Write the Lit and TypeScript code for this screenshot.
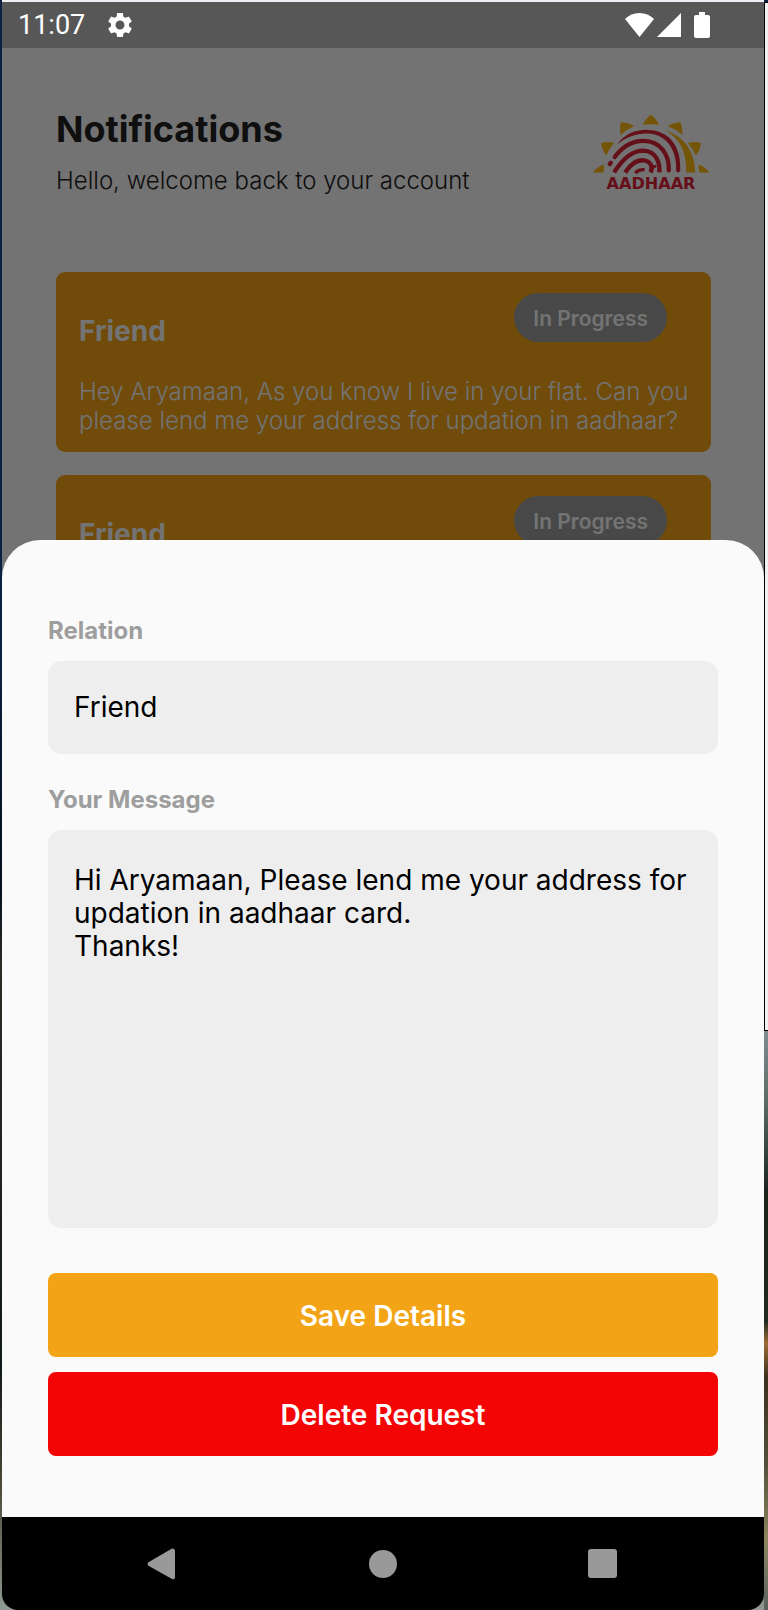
import { LitElement, html, css, svg } from "lit";
import { customElement, property, state } from "lit/decorators.js";

interface Request {
  relation: string;
  status: string;
  message: string;
}

const REQUESTS: Request[] = [
  {
    relation: "Friend",
    status: "In Progress",
    message:
      "Hey Aryamaan, As you know I live in your flat. Can you please lend me your address for updation in aadhaar?",
  },
  {
    relation: "Friend",
    status: "In Progress",
    message:
      "Hey Aryamaan, As you know I live in your flat. Can you please lend me your address for updation in aadhaar?",
  },
];

const rays = svg`
  <g fill="#fdb913">
    <path d="M190 60 Q198 44 214 29 Q231 42 239 60 Q214 56 190 60Z" />
    <path d="M125 52 Q148 52 165 64 Q142 73 124 90 Q120 70 125 52Z" />
    <path d="M66 115 Q85 108 105 114 Q90 130 82 151 Q70 138 66 115Z" />
    <path d="M42 202 Q54 184 75 178 Q76 190 73 202Z" />
    <path d="M265 64 Q284 52 303 52 Q310 70 309 90 Q290 73 265 64Z" />
    <path d="M325 115 Q346 108 364 114 Q361 138 348 151 Q340 130 325 115Z" />
    <path d="M357 178 Q376 184 389 202 H360Q357 190 357 178Z" />
    <path d="M259 77 C305 92 345 130 347 202 H320 C322 140 300 100 259 77Z" />
  </g>`;

const ridges = svg`
  <path fill="#dc2138" d="M114 119 C135 88 170 74 205 75 C270 76 307 125 302 198 Q296 206 290 198 C293 140 265 88 205 86 C170 85 140 97 114 119Z" />
  <g fill="none" stroke="#dc2138" stroke-width="13" stroke-linecap="round">
    <path d="M107 156 C130 125 160 108 192 108 C245 109 270 150 268 196" />
    <path d="M92 177 L95 173" />
  </g>
  <g fill="none" stroke="#dc2138" stroke-width="13">
    <path d="M105 202 C130 162 160 137 192 137 C230 139 242 170 240 202" />
    <path d="M138 202 C155 176 175 164 194 166 C214 169 222 185 214 202" />
    <path d="M213 190 Q220 182 231 184" stroke-width="8" />
    <path d="M168 204 Q178 192 196 194" stroke-width="10" />
  </g>`;

@customElement("status-bar")
export class StatusBar extends LitElement {
  static styles = css`
    :host {
      display: flex;
      align-items: center;
      height: 46px;
      padding: 0 54px 0 16px;
      box-sizing: border-box;
      background: #575757;
      color: #fff;
      font: 400 27px/32px Roboto, sans-serif;
    }
    .gear {
      width: 30px;
      height: 30px;
      margin-left: 20px;
    }
    .signals {
      display: flex;
      align-items: center;
      gap: 3px;
      margin-left: auto;
    }
    .battery {
      margin-left: 10px;
    }
    svg {
      display: block;
      fill: #fff;
    }
  `;

  render() {
    return html`
      <time>11:07</time>
      <svg class="gear" viewBox="0 0 24 24" aria-hidden="true">
        <path
          d="M19.14 12.94c.04-.3.06-.61.06-.94 0-.32-.02-.64-.07-.94l2.03-1.58c.18-.14.23-.41.12-.61l-1.92-3.32c-.12-.22-.37-.29-.59-.22l-2.39.96c-.5-.38-1.03-.7-1.62-.94l-.36-2.54c-.04-.24-.24-.41-.48-.41h-3.84c-.24 0-.43.17-.47.41l-.36 2.54c-.59.24-1.13.57-1.62.94l-2.39-.96c-.22-.08-.47 0-.59.22L2.74 8.87c-.12.21-.08.47.12.61l2.03 1.58c-.05.3-.09.63-.09.94s.02.64.07.94l-2.03 1.58c-.18.14-.23.41-.12.61l1.92 3.32c.12.22.37.29.59.22l2.39-.96c.5.38 1.03.7 1.62.94l.36 2.54c.05.24.24.41.48.41h3.84c.24 0 .44-.17.47-.41l.36-2.54c.59-.24 1.13-.56 1.62-.94l2.39.96c.22.08.47 0 .59-.22l1.92-3.32c.12-.22.07-.47-.12-.61l-2.01-1.58zM12 15.6c-1.98 0-3.6-1.62-3.6-3.6s1.62-3.6 3.6-3.6 3.6 1.62 3.6 3.6-1.62 3.6-3.6 3.6z"
        />
      </svg>
      <div class="signals">
        <svg width="29" height="24" viewBox="0 0 29 24" aria-hidden="true">
          <path d="M14.500 24 L0 6 Q6 0 14.500 0 Q23 0 29 6Z" />
        </svg>
        <svg width="24" height="24" viewBox="0 0 24 24" aria-hidden="true">
          <path d="M24 0 V24 H0Z" />
        </svg>
        <svg class="battery" width="16" height="26" viewBox="0 0 16 26" aria-hidden="true">
          <path d="M5 0 H11 V3 H14 Q16 3 16 5 V24 Q16 26 14 26 H2 Q0 26 0 24 V5 Q0 3 2 3 H5Z" />
        </svg>
      </div>
    `;
  }
}

@customElement("request-card")
export class RequestCard extends LitElement {
  @property({ attribute: false }) request!: Request;

  static styles = css`
    :host {
      display: block;
      padding: 21px 16px 17px 23px;
      border-radius: 9px;
      background: #f3a416;
      color: #fafafa;
    }
    .head {
      display: flex;
      justify-content: space-between;
      align-items: flex-start;
      padding-right: 28px;
      margin-bottom: 29px;
    }
    .relation {
      margin: 21px 0 0;
      font-size: 28px;
      line-height: 34px;
      font-weight: 700;
    }
    .status {
      padding: 11px 19px 9px;
      border-radius: 25px;
      background: #9e9e9e;
      font-size: 21px;
      line-height: 29px;
      font-weight: 600;
    }
    .message {
      margin: 0;
      font-size: 24px;
      line-height: 29px;
      font-weight: 300;
    }
  `;

  render() {
    return html`
      <div class="head">
        <h2 class="relation">${this.request.relation}</h2>
        <span class="status">${this.request.status}</span>
      </div>
      <p class="message">${this.request.message}</p>
    `;
  }
}

@customElement("request-sheet")
export class RequestSheet extends LitElement {
  @state() private relation = "Friend";
  @state() private message =
    "Hi Aryamaan, Please lend me your address for updation in aadhaar card.\nThanks!";

  static styles = css`
    :host {
      display: block;
      padding: 77px 46px 61px;
      border-radius: 38px 38px 0 0;
      background: #fafafa;
    }
    .form {
      display: flex;
      flex-direction: column;
      gap: 15px;
    }
    .field {
      display: flex;
      flex-direction: column;
      gap: 16px;
      margin-bottom: 17px;
    }
    .field.last {
      margin-bottom: 30px;
    }
    .label {
      color: #9e9e9e;
      font-size: 24px;
      line-height: 28px;
      font-weight: 700;
    }
    .control {
      display: block;
      box-sizing: border-box;
      width: 100%;
      margin: 0;
      padding: 30px 26px;
      border: 0;
      border-radius: 14px;
      outline: none;
      background: #eee;
      color: #000;
      font: inherit;
      font-size: 28px;
      line-height: 33px;
      resize: none;
    }
    .control.area {
      padding: 34px 26px;
      overflow: hidden;
    }
    .action {
      padding: 27px 26px 24px;
      border: 0;
      border-radius: 8px;
      background: #f3a416;
      color: #fff;
      font: inherit;
      font-size: 28px;
      line-height: 33px;
      font-weight: 600;
      cursor: pointer;
    }
    .action.danger {
      background: #f30505;
    }
  `;

  render() {
    return html`
      <form class="form" @submit=${(e: Event) => e.preventDefault()}>
        <div class="field">
          <label class="label" for="relation">Relation</label>
          <input
            class="control"
            id="relation"
            type="text"
            .value=${this.relation}
            @input=${(e: Event) => (this.relation = (e.target as HTMLInputElement).value)}
          />
        </div>
        <div class="field last">
          <label class="label" for="message">Your Message</label>
          <textarea
            class="control area"
            id="message"
            rows="10"
            spellcheck="false"
            .value=${this.message}
            @input=${(e: Event) => (this.message = (e.target as HTMLTextAreaElement).value)}
          ></textarea>
        </div>
        <button class="action" type="submit">Save Details</button>
        <button class="action danger" type="button">Delete Request</button>
      </form>
    `;
  }
}

@customElement("nav-bar")
export class NavBar extends LitElement {
  static styles = css`
    :host {
      display: grid;
      grid-template-columns: repeat(3, 1fr);
      justify-items: center;
      align-items: center;
      height: 93px;
      padding: 0 51px;
      box-sizing: border-box;
      border-radius: 0 0 16px 16px;
      background: #000;
    }
    .key {
      padding: 8px;
      border: 0;
      background: none;
      cursor: pointer;
    }
    svg {
      display: block;
      width: 32px;
      height: 32px;
      fill: #999;
    }
  `;

  render() {
    return html`
      <button class="key" aria-label="Back">
        <svg viewBox="0 0 32 32">
          <path d="M1 14.500 L25 .5 Q28 0 28 3 V29 Q28 32 25 31 L1 17.500 Q0 16 1 14.500Z" />
        </svg>
      </button>
      <button class="key" aria-label="Home">
        <svg viewBox="0 0 32 32"><circle cx="16" cy="16" r="14" /></svg>
      </button>
      <button class="key" aria-label="Overview">
        <svg viewBox="0 0 32 32"><rect x="1" y="1" width="29" height="29" rx="3" /></svg>
      </button>
    `;
  }
}

@customElement("app-root")
export class AppRoot extends LitElement {
  static styles = css`
    :host {
      display: grid;
      grid-template-columns: 2px 1fr 4px;
      min-height: 100vh;
      box-sizing: border-box;
      font-family: Inter, "Open Sans", sans-serif;
      background: linear-gradient(#0a2142 0 40%, #03101f 55%, #2b2a24 60%, #12191c 85%, #4a4634 92%, #8f9a92);
    }
    .phone {
      grid-column: 2;
      display: flex;
      flex-direction: column;
      border-top: 2px solid #eceff3;
      min-width: 0;
    }
    .screen {
      flex: 1;
      display: grid;
      grid-template-columns: minmax(0, 1fr);
      grid-template-rows: 1fr;
      background: #fafafa;
    }
    .home,
    .scrim,
    .sheet {
      grid-area: 1 / 1;
    }
    .home {
      padding: 59px 53px 0 54px;
      color: #212121;
    }
    .scrim {
      background: rgba(0, 0, 0, 0.54);
    }
    .sheet {
      align-self: end;
      margin-top: 120px;
    }
    .header {
      display: flex;
      align-items: center;
      justify-content: space-between;
      margin-bottom: 76px;
    }
    .title {
      margin: 0 0 15px;
      font-size: 36px;
      line-height: 44px;
      font-weight: 700;
    }
    .greeting {
      margin: 0;
      font-size: 24px;
      line-height: 30px;
      font-weight: 300;
    }
    .logo {
      flex: none;
      width: 118px;
      height: 76px;
      overflow: visible;
    }
    .logo-name {
      font: 700 48px "DejaVu Sans", sans-serif;
      fill: #dc2138;
    }
    .list {
      display: grid;
      gap: 23px;
    }
    .desktop {
      grid-column: 3;
      display: flex;
      flex-direction: column;
      padding-top: 2px;
    }
    .window {
      flex: 0 0 64%;
      box-sizing: border-box;
      border: solid #000;
      border-width: 1px 0 1px 1px;
      background: #f0f0f1;
    }
    .wallpaper {
      flex: 1;
      background: linear-gradient(#808c8d, #5c6b68 12%, #18231c 28%, #1f2a22 50%, #9b6a35 54%, #3a301e 60%, #55503a 75%, #8c8660 88%, #596160);
    }
  `;

  render() {
    return html`
      <main class="phone">
        <status-bar></status-bar>
        <div class="screen">
          <section class="home">
            <header class="header">
              <div>
                <h1 class="title">Notifications</h1>
                <p class="greeting">Hello, welcome back to your account</p>
              </div>
              <svg class="logo" viewBox="42 28 352 226" role="img" aria-label="Aadhaar">
                ${rays} ${ridges}
                <text class="logo-name" x="215" y="252" text-anchor="middle">AADHAAR</text>
              </svg>
            </header>
            <div class="list">
              ${REQUESTS.map((r) => html`<request-card .request=${r}></request-card>`)}
            </div>
          </section>
          <div class="scrim"></div>
          <request-sheet class="sheet"></request-sheet>
        </div>
        <nav-bar></nav-bar>
      </main>
      <div class="desktop">
        <div class="window"></div>
        <div class="wallpaper"></div>
      </div>
    `;
  }
}
